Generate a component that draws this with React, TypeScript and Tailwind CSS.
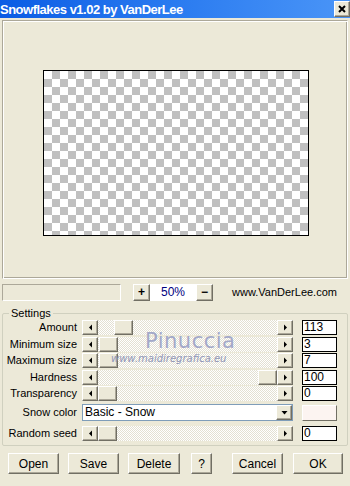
const font = "font-['Liberation_Sans','Noto_Sans',sans-serif]";

const raised =
  'border border-t-white border-l-white border-r-[#716f64] border-b-[#716f64] shadow-[inset_-1px_-1px_0_#aca899] bg-[#ece9d8]';

function Arrow({ dir }: { dir: 'left' | 'right' | 'down' }) {
  return (
    <div className={`${raised} w-[16px] h-full flex items-center justify-center shrink-0`}>
      <svg width="7" height="7" viewBox="0 0 7 7">
        {dir === 'left' && <path d="M2 3.5 L5 0.5 L5 6.5 Z" fill="#000" />}
        {dir === 'right' && <path d="M5 3.5 L2 0.5 L2 6.5 Z" fill="#000" />}
        {dir === 'down' && <path d="M0.5 2 L6.5 2 L3.5 5.5 Z" fill="#000" />}
      </svg>
    </div>
  );
}

function ScrollRow({ label, thumb, value }: { label: string; thumb: number; value: string }) {
  return (
    <div className="flex items-center h-[15px]">
      <span className="w-[74px] text-right text-[11px] text-black leading-none whitespace-nowrap">{label}</span>
      <div className="ml-[5px] w-[211px] h-full flex">
        <Arrow dir="left" />
        <div className="relative flex-1 h-full bg-[repeating-conic-gradient(#ffffff_0_25%,#e3e0d2_0_50%)] bg-[length:2px_2px]">
          <div className={`${raised} absolute top-0 h-full w-[19px]`} style={{ left: thumb }} />
        </div>
        <Arrow dir="right" />
      </div>
      <div className="ml-[9px] w-[35px] h-[15px] bg-white border border-black text-[12px] leading-[13px] pl-[1px] text-black">
        {value}
      </div>
    </div>
  );
}

function Btn({ label, w }: { label: string; w: string }) {
  return (
    <button className={`${raised} ${w} h-[21px] text-[12px] text-black flex items-center justify-center`}>
      {label}
    </button>
  );
}

export default function App() {
  return (
    <div className={`w-[350px] h-[486px] bg-[#ece9d8] flex flex-col overflow-hidden ${font}`}>
      {/* Title bar */}
      <div className="h-[18px] flex items-center justify-between bg-gradient-to-r from-[#0a5ce4] via-[#2a7bf0] to-[#4a95f7]">
        <span className="text-white font-bold text-[13px] leading-none tracking-[-0.5px]">
          Snowflakes v1.02 by VanDerLee
        </span>
        <div className={`${raised} w-[16px] h-[16px] flex items-center justify-center`}>
          <svg width="8" height="8" viewBox="0 0 8 8">
            <path d="M1 1 L7 7 M7 1 L1 7" stroke="#000" strokeWidth="2" />
          </svg>
        </div>
      </div>

      {/* Preview panel */}
      <div className="mt-[2px] mx-[2px] h-[259px] border border-[#aca899] border-r-white border-b-white shadow-[inset_1px_1px_0_#fff,inset_-1px_-1px_0_#aca899] flex justify-center pt-[49px] pl-[1px]">
        <div className="w-[266px] h-[166px] border border-black bg-[conic-gradient(#c0c0c0_25%,#ffffff_0_50%,#c0c0c0_0_75%,#ffffff_0)] bg-[length:16px_16px]" />
      </div>

      {/* Zoom row */}
      <div className="mt-[4px] flex items-center h-[18px]">
        <div className="ml-[2px] w-[119px] h-[17px] border border-[#aca899] border-r-white border-b-white" />
        <div className="ml-[12px] flex h-[17px]">
          <div className={`${raised} w-[17px] h-full flex items-center justify-center text-[12px] font-bold`}>+</div>
          <div className="w-[46px] h-full bg-white flex items-center justify-center text-[12px] text-[#000080]">50%</div>
          <div className={`${raised} w-[17px] h-full flex items-center justify-center text-[12px] font-bold`}>−</div>
        </div>
        <span className="ml-[19px] text-[11px] text-black">www.VanDerLee.com</span>
      </div>

      {/* Settings group */}
      <div className="relative mt-[12px] mx-[2px] h-[133px] border border-[#d0d0bf] rounded-[2px] pt-[6px]">
        <span className="absolute -top-[7px] left-[6px] bg-[#ece9d8] px-[2px] text-[11px] leading-[13px] text-black">Settings</span>

        <div className="flex flex-col gap-[1.6px]">
          <ScrollRow label="Amount" thumb={16} value="113" />
          <ScrollRow label="Minimum size" thumb={1} value="3" />
          <ScrollRow label="Maximum size" thumb={1} value="7" />
          <ScrollRow label="Hardness" thumb={160} value="100" />
          <ScrollRow label="Transparency" thumb={0} value="0" />
        </div>

        <div className="mt-[3px] flex items-center h-[17px]">
          <span className="w-[74px] text-right text-[11px] text-black leading-none">Snow color</span>
          <div className="ml-[5px] w-[211px] h-full flex bg-white border border-[#7f9db9]">
            <span className="flex-1 text-[12px] leading-[15px] pl-[2px] text-black">Basic - Snow</span>
            <Arrow dir="down" />
          </div>
          <div className="ml-[9px] w-[35px] h-[16px] border border-t-white border-l-white border-r-[#716f64] border-b-[#716f64] bg-[#fcf4f1]" />
        </div>

        <div className="mt-[5px]">
          <ScrollRow label="Random seed" thumb={0} value="0" />
        </div>

        {/* watermark over the sliders */}
        <span className="absolute z-10 left-[142px] top-[17px] text-[21px] leading-none text-[#a3a9c9] font-['DejaVu_Sans',sans-serif] tracking-[0.5px] pointer-events-none">
          Pinuccia
        </span>
        <span className="absolute z-10 left-[108px] top-[40px] text-[10px] leading-none italic text-[#9197b8] font-['DejaVu_Sans',sans-serif] pointer-events-none">
          www.maidiregrafica.eu
        </span>
      </div>

      {/* Buttons */}
      <div className="mt-[7px] flex items-center">
        <div className="ml-[8px]"><Btn label="Open" w="w-[51px]" /></div>
        <div className="ml-[9px]"><Btn label="Save" w="w-[51px]" /></div>
        <div className="ml-[9px]"><Btn label="Delete" w="w-[52px]" /></div>
        <div className="ml-[11px]"><Btn label="?" w="w-[21px]" /></div>
        <div className="ml-[20px]"><Btn label="Cancel" w="w-[51px]" /></div>
        <div className="ml-[10px]"><Btn label="OK" w="w-[50px]" /></div>
      </div>
    </div>
  );
}
